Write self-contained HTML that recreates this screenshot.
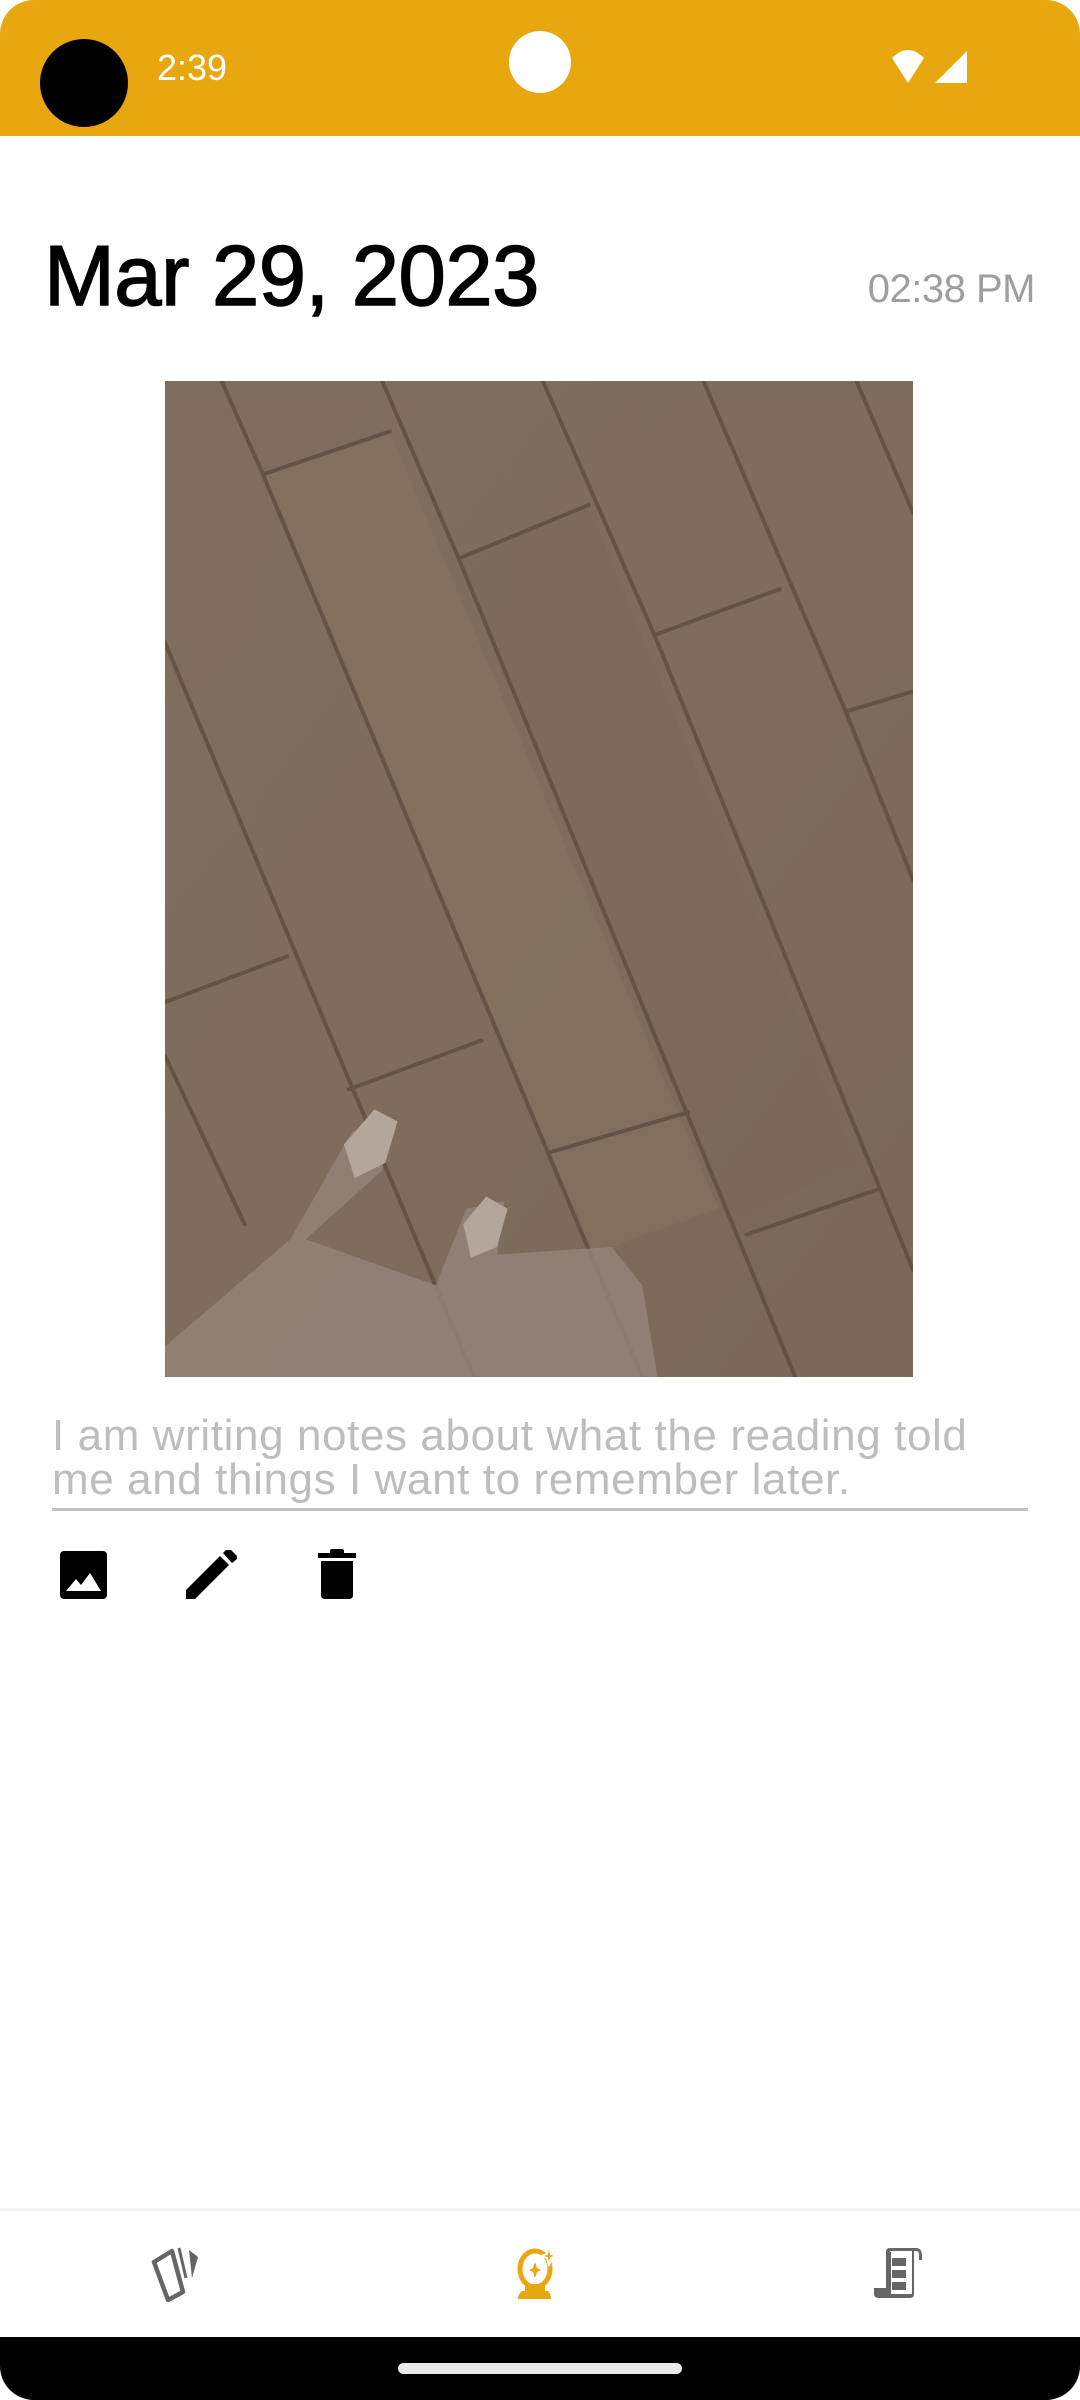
<!DOCTYPE html>
<html><head><meta charset="utf-8"><style>
html,body{margin:0;padding:0}
body{width:1080px;height:2400px;position:relative;overflow:hidden;background:#fff;font-family:"Liberation Sans",sans-serif}
.abs{position:absolute}
</style></head><body>
<div class="abs" style="left:0;top:0;width:1080px;height:136px;background:#E8A70F;border-radius:34px 34px 0 0"></div>
<div class="abs" style="left:40px;top:39px;width:88px;height:88px;border-radius:50%;background:#000"></div>
<div class="abs" style="left:157px;top:48px;font-size:36px;color:#fff;line-height:40px">2:39</div>
<div class="abs" style="left:509px;top:31px;width:62px;height:62px;border-radius:50%;background:#fff"></div>
<svg class="abs" style="left:888px;top:48px" width="84" height="40" viewBox="0 0 84 40">
<path d="M4 10 Q20 -6 36 10 L20 35 Z" fill="#fff"/>
<path d="M79 3 V35 H47 Z" fill="#fff"/>
</svg>

<div class="abs" style="left:44px;top:222px;font-size:85px;line-height:110px;color:#000;letter-spacing:-0.5px;-webkit-text-stroke:1.5px #000">Mar 29, 2023</div>
<div class="abs" style="right:45px;top:264px;font-size:40px;line-height:50px;color:#9e9e9e;letter-spacing:-0.5px">02:38 PM</div>

<svg class="abs" style="left:165px;top:381px" width="748" height="996" viewBox="108 249 489 651" preserveAspectRatio="none">
<defs>
<linearGradient id="g" x1="0" y1="0" x2="1" y2="1">
<stop offset="0" stop-color="#7f6e5e"/><stop offset="0.5" stop-color="#7e6d5d"/><stop offset="1" stop-color="#796858"/>
</linearGradient>
<clipPath id="c"><rect x="108" y="249" width="489" height="651"/></clipPath>
</defs>
<g clip-path="url(#c)">
<rect x="108" y="249" width="489" height="651" fill="url(#g)"/>
<path d="M172 310 L255 282 L470 790 L385 820 Z" fill="#86755f" opacity="0.45"/>
<path d="M300 365 L385 330 L560 760 L480 800 Z" fill="#7a6a5a" opacity="0.4"/>
<g stroke="#5e4f42" stroke-width="2.6" fill="none" stroke-linecap="round" opacity="0.85">
<path d="M145 249 L172 310 L420 900"/>
<path d="M250 249 L300 365 L520 900"/>
<path d="M355 249 L428 415 L597 830"/>
<path d="M460 249 L553 465 L597 575"/>
<path d="M560 249 L597 335"/>
<path d="M108 420 L310 900"/>
<path d="M108 690 L160 800"/>
<path d="M172 310 L255 282"/><path d="M300 365 L385 330"/><path d="M428 415 L510 385"/><path d="M553 465 L597 452"/>
<path d="M108 655 L188 625"/><path d="M228 712 L315 680"/><path d="M360 753 L450 727"/><path d="M488 807 L575 777"/>
</g>
<path d="M108 880 L190 810 L230 740 L255 730 L250 765 L200 810 L285 840 L305 790 L330 785 L325 820 L400 815 L420 840 L430 900 L108 900 Z" fill="#95857a" opacity="0.8"/>
<path d="M225 748 L245 725 L260 733 L252 760 L232 770 Z" fill="#b3a69b"/>
<path d="M303 800 L318 782 L332 790 L325 815 L308 822 Z" fill="#b3a69b"/>
</g>
</svg>

<div class="abs" style="left:52px;top:1414px;width:1000px;font-size:44px;line-height:44px;color:#bdbdbd;letter-spacing:0.6px;white-space:nowrap">I am writing notes about what the reading told<br>me and things I want to remember later.</div>
<div class="abs" style="left:52px;top:1508px;width:976px;height:3px;background:#c2c2c2"></div>

<svg class="abs" style="left:60px;top:1551px" width="47" height="48" viewBox="0 0 47 48">
<rect x="0" y="0" width="47" height="48" rx="4" fill="#000"/>
<path d="M6 40 L16 28 L21 34 L30 22 L41 40 Z" fill="#fff"/>
</svg>
<svg class="abs" style="left:185px;top:1550px" width="56" height="50" viewBox="0 0 56 50">
<path d="M1 40 L35 6 L44 15 L10 49 L1 49 Z" fill="#000"/>
<path d="M38 3 L42 -1 L46 0 L52 6 L52 9 L47 13 Z" fill="#000"/>
</svg>
<svg class="abs" style="left:318px;top:1549px" width="38" height="52" viewBox="0 0 38 52">
<rect x="0" y="4" width="38" height="5" fill="#000"/>
<rect x="12" y="0" width="14" height="6" rx="2" fill="#000"/>
<path d="M3 12 H35 V46 Q35 50 31 50 H7 Q3 50 3 46 Z" fill="#000"/>
</svg>

<div class="abs" style="left:0;top:2208px;width:1080px;height:3px;background:#f3f3f3"></div>
<svg class="abs" style="left:140px;top:2240px" width="80" height="70" viewBox="0 0 80 70">
<path d="M14 22 L32 11 L43 52 L28 60 Z" fill="none" stroke="#666" stroke-width="4.5" stroke-linejoin="round"/>
<path d="M39 8 L46 38" stroke="#666" stroke-width="3"/>
<path d="M49 10 L58 17 L52 38 Z" fill="#666"/>
</svg>
<svg class="abs" style="left:515px;top:2246px" width="50" height="56" viewBox="0 0 50 56">
<ellipse cx="20" cy="23" rx="15" ry="18" fill="none" stroke="#E8A70F" stroke-width="5"/>
<path d="M34 0 L36 8 L42 10 L36 12 L34 20 L32 12 L26 10 L32 8 Z" fill="#E8A70F" stroke="#fff" stroke-width="2"/>
<path d="M20 16 L22 22 L26 24 L22 26 L20 32 L18 26 L14 24 L18 22 Z" fill="#E8A70F"/>
<path d="M10 38 H30 V45 H33 Q36 48 36 53 H3 Q3 48 7 45 H10 Z" fill="#E8A70F"/>
</svg>
<svg class="abs" style="left:872px;top:2246px" width="56" height="56" viewBox="0 0 56 56">
<path d="M14 48 V6 Q14 2 18 2 H44 Q50 2 50 10 V14 H47 V8 Q47 5 44 5 H42 V48 Q42 52 38 52 H8 Q2 52 2 48 V42 H14 Z" fill="#666"/>
<path d="M18 5 H40 V48 H17 Z" fill="#fff"/>
<path d="M18 6 V48" stroke="#666" stroke-width="2"/>
<rect x="20" y="12" width="14" height="8" fill="#666"/>
<rect x="20" y="24" width="14" height="8" fill="#666"/>
<rect x="20" y="36" width="14" height="8" fill="#666"/>
<path d="M3 42 H16 V52 H8 Q3 52 3 47 Z" fill="#666"/>
</svg>

<div class="abs" style="left:0;top:2337px;width:1080px;height:63px;background:#000;border-radius:0 0 34px 34px"></div>
<div class="abs" style="left:398px;top:2363px;width:284px;height:11px;border-radius:6px;background:#e9e9e9"></div>
</body></html>
